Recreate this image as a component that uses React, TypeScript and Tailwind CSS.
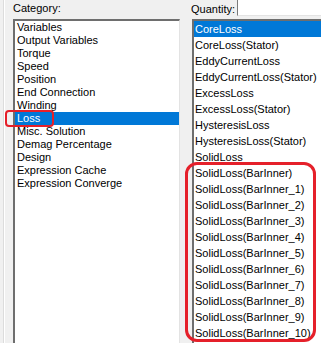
import React from 'react';

const categories = [
  'Variables',
  'Output Variables',
  'Torque',
  'Speed',
  'Position',
  'End Connection',
  'Winding',
  'Loss',
  'Misc. Solution',
  'Demag Percentage',
  'Design',
  'Expression Cache',
  'Expression Converge',
];

const quantities = [
  'CoreLoss',
  'CoreLoss(Stator)',
  'EddyCurrentLoss',
  'EddyCurrentLoss(Stator)',
  'ExcessLoss',
  'ExcessLoss(Stator)',
  'HysteresisLoss',
  'HysteresisLoss(Stator)',
  'SolidLoss',
  'SolidLoss(BarInner)',
  'SolidLoss(BarInner_1)',
  'SolidLoss(BarInner_2)',
  'SolidLoss(BarInner_3)',
  'SolidLoss(BarInner_4)',
  'SolidLoss(BarInner_5)',
  'SolidLoss(BarInner_6)',
  'SolidLoss(BarInner_7)',
  'SolidLoss(BarInner_8)',
  'SolidLoss(BarInner_9)',
  'SolidLoss(BarInner_10)',
];

export default function App() {
  return (
    <div
      className="relative flex w-[321px] h-[343px] overflow-hidden bg-[#f0f0f0] text-[11px] text-black"
      style={{ fontFamily: '"Liberation Sans", Arial, sans-serif' }}
    >
      {/* group edge */}
      <div className="w-[1px] ml-[3px] bg-white border-l border-[#dcdcdc] box-content" />

      {/* Category column */}
      <div className="flex flex-col ml-[8px] w-[167px]">
        <div className="pt-[2px] h-[19px] leading-[13px]">Category:</div>
        <div className="flex-1 bg-white border-t-2 border-l-2 border-[#6e6e6e] border-r border-r-[#e3e3e3]">
          {categories.map((c) => (
            <div
              key={c}
              className={`h-[13px] leading-[13px] pl-[2px] whitespace-nowrap ${
                c === 'Loss' ? 'bg-[#0078d7] text-white' : ''
              }`}
            >
              {c}
            </div>
          ))}
        </div>
      </div>

      {/* Quantity column */}
      <div className="flex flex-col ml-[11px] flex-1">
        <div className="flex items-start h-[19px]">
          <div className="mt-[3px] leading-[13px] whitespace-nowrap">Quantity:</div>
          <div className="ml-[2px] flex-1 h-[16px] bg-white border-l border-[#7a7a7a] border-b border-b-[#e3e3e3]" />
        </div>
        <div className="flex-1 ml-[1px] bg-white border-t-2 border-l-2 border-[#6e6e6e]">
          {quantities.map((q, i) => (
            <div
              key={q}
              className={`h-[16px] leading-[16px] pl-[1px] whitespace-nowrap ${
                i === 0 ? 'bg-[#0078d7] text-white' : ''
              }`}
            >
              {q}
            </div>
          ))}
        </div>
      </div>

      {/* red annotations */}
      <div className="absolute left-[5px] top-[110px] w-[49px] h-[17px] border-[2.5px] border-[#e5202a] rounded-[4px]" />
      <div className="absolute left-[185px] top-[162px] w-[131px] h-[180px] border-[3px] border-[#e5202a] rounded-[12px]" />
    </div>
  );
}
